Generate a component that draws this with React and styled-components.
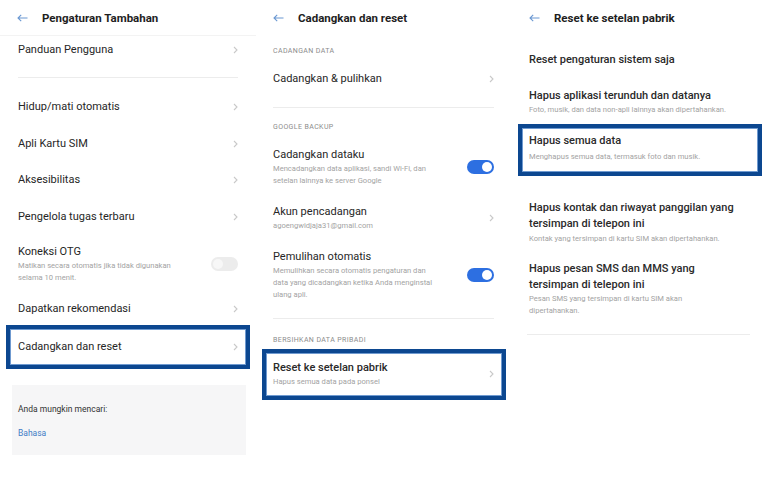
import React from 'react';
import styled, { createGlobalStyle } from 'styled-components';

const GlobalStyle = createGlobalStyle`
  body {
    margin: 0;
    background: #ffffff;
    font-family: Roboto, "Noto Sans", "Liberation Sans", sans-serif;
  }
`;

const Screen = styled.div`
  display: grid;
  grid-template-columns: 256px 256px 256px;
  width: 768px;
  height: 480px;
  overflow: hidden;
  background: #ffffff;
`;

const Panel = styled.div`
  display: flex;
  flex-direction: column;
`;

const Header = styled.div`
  height: 36px;
  display: flex;
  align-items: center;
  padding-left: 17px;
  gap: 14px;
  border-bottom: 1px solid ${(props) => (props.line ? '#f3f3f3' : 'transparent')};
  box-sizing: border-box;
`;

const HeaderTitle = styled.div`
  font-size: 11.5px;
  font-weight: 700;
  color: #1e1e1e;
`;

const Row = styled.div`
  height: ${(props) => props.h}px;
  display: flex;
  align-items: center;
  justify-content: space-between;
  padding: 0 18px;
  box-sizing: border-box;
  flex-shrink: 0;
`;

const Block = styled.div`
  display: flex;
  align-items: center;
  justify-content: space-between;
  padding: ${(props) => props.pad || '0 18px'};
  flex-shrink: 0;
`;

const Texts = styled.div`
  display: flex;
  flex-direction: column;
`;

const Label = styled.div`
  font-size: 11px;
  font-weight: ${(props) => (props.strong ? 500 : 400)};
  line-height: ${(props) => props.lh || 16}px;
  color: ${(props) => (props.strong ? '#2a2a2a' : '#262626')};
`;

const Sub = styled.div`
  font-size: 7.6px;
  line-height: 12px;
  color: #a3a3a3;
  margin-top: ${(props) => props.mt || 0}px;
`;

const Divider = styled.div`
  height: 1px;
  background: #ececec;
  margin: ${(props) => props.m || '0 18px'};
  flex-shrink: 0;
`;

const Section = styled.div`
  height: ${(props) => props.h}px;
  display: flex;
  align-items: ${(props) => props.align || 'center'};
  padding: 0 17px;
  box-sizing: border-box;
  font-size: 7px;
  letter-spacing: 0.4px;
  text-transform: uppercase;
  color: #8c8c8c;
  flex-shrink: 0;
`;

const Highlight = styled.div`
  margin: 0 6px;
  border: 4px solid #0c4790;
  box-shadow: inset 0 0 0 1px #6f9ad0;
  display: flex;
  align-items: center;
  justify-content: space-between;
  padding: ${(props) => props.pad};
  flex-shrink: 0;
`;

const SuggestCard = styled.div`
  margin: ${(props) => props.mt}px 10px 0 12px;
  height: 70px;
  background: #f6f6f7;
  padding: 18px 6px 0 6px;
  box-sizing: border-box;
`;

const CardText = styled.div`
  font-size: 8.5px;
  color: #333333;
  line-height: 12px;
`;

const LinkText = styled.div`
  font-size: 8.5px;
  color: #3f7cc6;
  line-height: 12px;
  margin-top: 12px;
`;

const Track = styled.div`
  width: 27px;
  height: 14px;
  border-radius: 7px;
  background: ${(props) => (props.on ? '#2d6fe1' : '#ececec')};
  display: flex;
  align-items: center;
  justify-content: ${(props) => (props.on ? 'flex-end' : 'flex-start')};
  padding: 0 2px;
  box-sizing: border-box;
  flex-shrink: 0;
`;

const Knob = styled.div`
  width: 10px;
  height: 10px;
  border-radius: 50%;
  background: ${(props) => (props.on ? '#ffffff' : '#f7f7f7')};
`;

const Toggle = ({ on }) => (
  <Track on={on ? 1 : 0}>
    <Knob on={on ? 1 : 0} />
  </Track>
);

const Chevron = () => (
  <svg width="5" height="8" viewBox="0 0 5 8" style={{ flexShrink: 0 }}>
    <polyline points="1,1 4,4 1,7" fill="none" stroke="#c9c9c9" strokeWidth="1.1" />
  </svg>
);

const BackArrow = () => (
  <svg width="11" height="8" viewBox="0 0 11 8">
    <path d="M10.5 4H1M4.2 0.8L1 4l3.2 3.2" fill="none" stroke="#6a98d2" strokeWidth="1.1" />
  </svg>
);

const PanelHeader = ({ title, line }) => (
  <Header line={line}>
    <BackArrow />
    <HeaderTitle>{title}</HeaderTitle>
  </Header>
);

const App = () => {
  return (
    <>
      <GlobalStyle />
      <Screen>
        <Panel>
          <PanelHeader title="Pengaturan Tambahan" line />
          <Row h={28}>
            <Label>Panduan Pengguna</Label>
            <Chevron />
          </Row>
          <Divider m="13px 18px 0 18px" />
          <Row h={37} style={{ marginTop: 10 }}>
            <Label>Hidup/mati otomatis</Label>
            <Chevron />
          </Row>
          <Row h={37}>
            <Label>Apli Kartu SIM</Label>
            <Chevron />
          </Row>
          <Row h={36}>
            <Label>Aksesibilitas</Label>
            <Chevron />
          </Row>
          <Row h={37}>
            <Label>Pengelola tugas terbaru</Label>
            <Chevron />
          </Row>
          <Block pad="9px 18px 8px 18px">
            <Texts>
              <Label>Koneksi OTG</Label>
              <Sub>Matikan secara otomatis jika tidak digunakan</Sub>
              <Sub>selama 10 menit.</Sub>
            </Texts>
            <Toggle />
          </Block>
          <Row h={33}>
            <Label>Dapatkan rekomendasi</Label>
            <Chevron />
          </Row>
          <Highlight pad="0 8px 0 8px" style={{ height: 44, boxSizing: 'border-box' }}>
            <Label>Cadangkan dan reset</Label>
            <Chevron />
          </Highlight>
          <SuggestCard mt={16}>
            <CardText>Anda mungkin mencari:</CardText>
            <LinkText>Bahasa</LinkText>
          </SuggestCard>
        </Panel>

        <Panel>
          <PanelHeader title="Cadangkan dan reset" />
          <Section h={30}>Cadangan data</Section>
          <Row h={26} style={{ paddingLeft: 17 }}>
            <Label>Cadangkan &amp; pulihkan</Label>
            <Chevron />
          </Row>
          <Divider m="15px 18px 0 17px" />
          <Section h={38}>Google backup</Section>
          <Block pad="1px 18px 9px 17px">
            <Texts>
              <Label>Cadangkan dataku</Label>
              <Sub>Mencadangkan data aplikasi, sandi Wi-Fi, dan</Sub>
              <Sub>setelan lainnya ke server Google</Sub>
            </Texts>
            <Toggle on />
          </Block>
          <Block pad="8px 18px 10px 17px">
            <Texts>
              <Label>Akun pencadangan</Label>
              <Sub>agoengwidjaja31@gmail.com</Sub>
            </Texts>
            <Chevron />
          </Block>
          <Block pad="7px 18px 17px 17px">
            <Texts>
              <Label>Pemulihan otomatis</Label>
              <Sub>Memulihkan secara otomatis pengaturan dan</Sub>
              <Sub>data yang dicadangkan ketika Anda menginstal</Sub>
              <Sub>ulang apli.</Sub>
            </Texts>
            <Toggle on />
          </Block>
          <Divider m="0 18px 0 17px" />
          <Section h={30} align="flex-end">
            <span style={{ lineHeight: '12px', paddingBottom: 3 }}>Bersihkan data pribadi</span>
          </Section>
          <Highlight pad="7px 8px 8px 7px">
            <Texts>
              <Label strong>Reset ke setelan pabrik</Label>
              <Sub>Hapus semua data pada ponsel</Sub>
            </Texts>
            <Chevron />
          </Highlight>
        </Panel>

        <Panel>
          <PanelHeader title="Reset ke setelan pabrik" />
          <Row h={42} style={{ marginTop: 3, paddingLeft: 17 }}>
            <Label strong>Reset pengaturan sistem saja</Label>
          </Row>
          <Block pad="7px 18px 8px 17px">
            <Texts>
              <Label strong>Hapus aplikasi terunduh dan datanya</Label>
              <Sub>Foto, musik, dan data non-apli lainnya akan dipertahankan.</Sub>
            </Texts>
          </Block>
          <Highlight pad="5px 8px 9px 7px">
            <Texts>
              <Label strong>Hapus semua data</Label>
              <Sub mt={2}>Menghapus semua data, termasuk foto dan musik.</Sub>
            </Texts>
          </Highlight>
          <Block pad="24px 18px 16px 17px">
            <Texts>
              <Label strong>Hapus kontak dan riwayat panggilan yang</Label>
              <Label strong>tersimpan di telepon ini</Label>
              <Sub mt={1}>Kontak yang tersimpan di kartu SIM akan dipertahankan.</Sub>
            </Texts>
          </Block>
          <Block pad="0 18px 17px 17px">
            <Texts>
              <Label strong>Hapus pesan SMS dan MMS yang</Label>
              <Label strong>tersimpan di telepon ini</Label>
              <Sub>Pesan SMS yang tersimpan di kartu SIM akan</Sub>
              <Sub>dipertahankan.</Sub>
            </Texts>
          </Block>
          <Divider m="0 18px 0 15px" />
        </Panel>
      </Screen>
    </>
  );
};

export default App;
